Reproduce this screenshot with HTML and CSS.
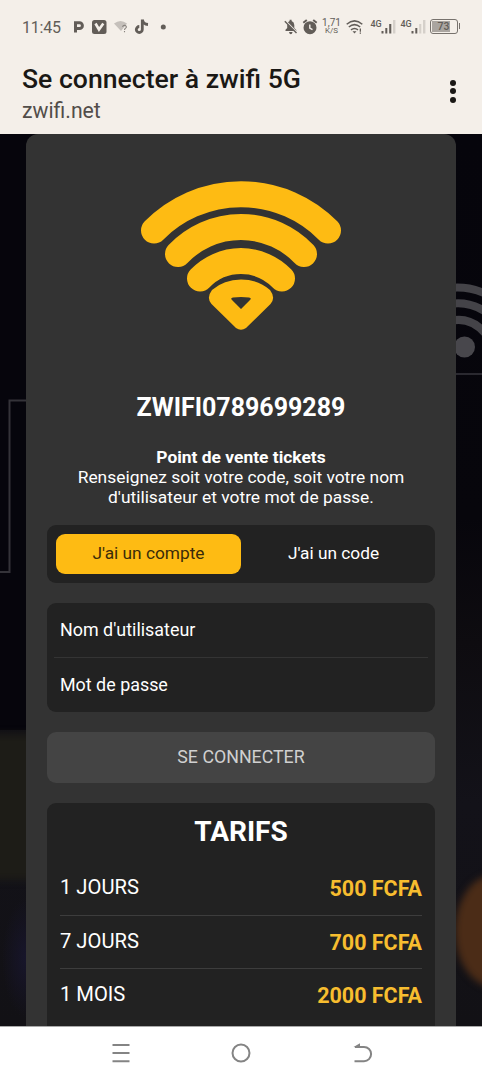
FILE: index.html
```html
<!DOCTYPE html>
<html lang="fr">
<head>
<meta charset="utf-8">
<title>Se connecter à zwifi 5G</title>
<link rel="stylesheet" href="styles.css">
</head>
<body>
<div class="phone">
  <div class="status">
    <div class="status-left">
      <span class="clock">11:45</span>
      <svg class="status-icons" width="100" height="20" viewBox="70 17 100 20">
        <path d="M75.500 32.500V22.800H79.500A2.800 2.800 0 0 1 79.500 28.600H76" fill="none" stroke="#625d58" stroke-width="3"/>
        <rect x="92" y="20" width="14.500" height="14" rx="2.500" fill="#625d58"/>
        <path d="M95.500 23.500L99 29.500L103.300 23.500" fill="none" stroke="#f4efe9" stroke-width="2.600"/>
        <path d="M114 23.500Q120.500 18.500 127 23.500L125.500 25.500L121 31Z" fill="#c5c0bb"/>
        <path d="M122.500 26.800Q123 25.200 124.800 25.400Q126.800 26 126.200 27.600Q124.500 28.700 124.500 30M124.500 31V32.200" fill="none" stroke="#88837e" stroke-width="1.100"/>
        <path d="M142.300 19.500V29.500A3 3 0 1 1 139.300 26.500M142.500 20Q143.300 24.200 148 24.500" fill="none" stroke="#625d58" stroke-width="2.800"/>
        <circle cx="163.300" cy="27" r="2.500" fill="#625d58"/>
      </svg>
    </div>
    <div class="status-right">
      <svg class="status-icons" width="40" height="20" viewBox="282 17 40 20">
        <path d="M284.500 31V29.800L286.200 28V24.500Q286.500 21.500 288.600 21V19.800H290.600V21Q293.300 22 293.300 25V28L295.300 30V31ZM288 32H291.600Q291 34.300 289.800 34.300Q288.500 34.300 288 32Z" fill="#625d58"/>
        <path d="M284.200 20.500L296 32.500" stroke="#f4efe9" stroke-width="1.600"/>
        <path d="M283.800 21.300L295.500 33" stroke="#625d58" stroke-width="1.400"/>
        <circle cx="309" cy="27.700" r="3.500" fill="#625d58" stroke="#625d58" stroke-width="6"/>
        <path d="M308.800 24.500V28L311.500 29.700" fill="none" stroke="#f4efe9" stroke-width="1.400"/>
        <path d="M302.300 22.800L305.800 19.900M312.200 19.900L315.700 22.800" stroke="#625d58" stroke-width="1.900"/>
      </svg>
      <span class="speed"><span>1,71</span><span class="unit">K/S</span></span>
      <svg class="status-icons" width="20" height="20" viewBox="343 17 20 20">
        <path d="M345.700 24.200Q353.500 17.600 361.300 24.200M347.800 27Q353.500 22.300 359.200 27M350 29.800Q353.500 27 357 29.800" fill="none" stroke="#625d58" stroke-width="1.500"/>
        <path d="M351.500 31.200H355.500L353.500 33.500ZM358.700 28.500H360V31.800H358.700ZM358.700 32.500H360V33.700H358.700Z" fill="#625d58"/>
      </svg>
      <span class="net net-a">4G</span>
      <svg class="bars" width="15" height="16" viewBox="381 18 15 16">
        <path d="M381.500 31H383.500V33.500H381.500ZM385.300 28H387.300V33.500H385.300ZM389.200 24H391.300V33.500H389.200Z" fill="#625d58"/>
        <path d="M393 20H395.400V33.500H393Z" fill="#d5d0ca"/>
      </svg>
      <span class="net net-b">4G</span>
      <svg class="bars" width="15" height="16" viewBox="411 18 15 16">
        <path d="M411.500 31H413.500V33.500H411.500ZM415.300 28H417.300V33.500H415.300Z" fill="#625d58"/>
        <path d="M419.200 24H421.300V33.500H419.200ZM423 20H425.400V33.500H423Z" fill="#d5d0ca"/>
      </svg>
      <span class="battery"><span class="level">73</span></span><span class="battery-tip"></span>
    </div>
  </div>

  <header class="app-bar">
    <div class="titles">
      <div class="title">Se connecter à zwifi 5G</div>
      <div class="host">zwifi.net</div>
    </div>
    <div class="more"><i></i><i></i><i></i></div>
  </header>

  <main class="page">
    <svg class="scene" width="482" height="892" viewBox="0 134 482 892">
      <defs>
        <filter id="edge" filterUnits="userSpaceOnUse" x="-80" y="650" width="640" height="450" color-interpolation-filters="sRGB"><feGaussianBlur stdDeviation="3.500"/></filter>
        <radialGradient id="glow">
          <stop offset="0" stop-color="#17152b"/><stop offset="1" stop-color="#17152b" stop-opacity="0"/>
        </radialGradient>
        <linearGradient id="night" x1="0" y1="0" x2="0" y2="1">
          <stop offset="0" stop-color="#06050c"/><stop offset=".43" stop-color="#07060c"/>
          <stop offset=".57" stop-color="#0e0c10"/><stop offset=".75" stop-color="#131219"/><stop offset="1" stop-color="#121115"/>
        </linearGradient>
      </defs>
      <rect y="134" width="482" height="892" fill="url(#night)"/>
      <rect y="134" width="26" height="596" fill="#06050c"/>
      <rect x="-20" y="734" width="60" height="146" fill="#1d1c17" filter="url(#edge)"/>
      <ellipse cx="26" cy="958" rx="24" ry="60" fill="url(#glow)"/>
      <path d="M26 400.500H9.500V572H0" fill="none" stroke="#343339" stroke-width="2"/>
      <path d="M456 374H482" stroke="#34333a" stroke-width="1.600"/>
      <circle cx="464.500" cy="347" r="10.500" fill="#48474c"/>
      <g fill="none" stroke="#444348" stroke-width="8">
        <path d="M450 288Q469 286 486 294"/>
        <path d="M450 304Q469 301 486 312"/>
        <path d="M450 321Q470 316 485 333"/>
      </g>
      <ellipse cx="494" cy="931" rx="39" ry="56" fill="#4b2c17" filter="url(#edge)"/>
    </svg>
    <section class="card">
      <svg class="logo" width="202" height="150" viewBox="140 180 202 150">
        <g fill="none" stroke="#febb13" stroke-width="26" stroke-linecap="round">
          <path d="M154 230.500A122.500 122.500 0 0 1 328 230.500"/>
          <path d="M178 254A87 87 0 0 1 304 254"/>
          <path d="M200 278.500A57 57 0 0 1 282 278.500"/>
        </g>
        <path d="M212 290Q224 279.500 241 279.500Q258 279.500 270 290Q276 298 270.500 304L246 328Q241 331.500 236 328L211.500 304Q206 298 212 290ZM232 300L241 309L250 300Q252 298 249 297.500Q241 296.500 233 297.500Q230 298 232 300Z" fill="#febb13" fill-rule="evenodd"/>
      </svg>
      <h1 class="name">ZWIFI0789699289</h1>
      <div class="intro">
        <b>Point de vente tickets</b>
        <span>Renseignez soit votre code, soit votre nom</span>
        <span>d'utilisateur et votre mot de passe.</span>
      </div>
      <div class="tabs">
        <div class="tab active">J'ai un compte</div>
        <div class="tab">J'ai un code</div>
      </div>
      <div class="fields">
        <div class="field">Nom d'utilisateur</div>
        <div class="rule"></div>
        <div class="field">Mot de passe</div>
      </div>
      <div class="submit">SE CONNECTER</div>
      <div class="prices">
        <h2 class="prices-title">TARIFS</h2>
        <div class="row"><span>1 JOURS</span><b class="price">500 FCFA</b></div>
        <div class="row"><span>7 JOURS</span><b class="price">700 FCFA</b></div>
        <div class="row"><span>1 MOIS</span><b class="price">2000 FCFA</b></div>
      </div>
    </section>
  </main>

  <nav class="nav">
    <svg width="24" height="24" viewBox="0 0 24 24"><path d="M3.500 4H20.500M3.500 12H20.500M3.500 20.200H20.500"/></svg>
    <svg width="24" height="24" viewBox="0 0 24 24"><circle cx="12" cy="12" r="8.500"/></svg>
    <svg width="24" height="24" viewBox="0 0 24 24"><path d="M5 6H14A6.800 6.800 0 0 1 14 20.200H4.500"/><path class="solid" d="M3.500 6L10 2.300V7Z"/></svg>
  </nav>
</div>
</body>
</html>
```
FILE: styles.css
```css
* { box-sizing: border-box; }
body { margin: 0; font-family: Roboto, sans-serif; }
.phone { width: 482px; height: 1080px; overflow: hidden; display: flex; flex-direction: column; background: #f4efe9; }
.status { height: 54px; flex: none; display: flex; justify-content: space-between; color: #625d58; }
.status-left { display: flex; padding: 17px 0 0 22px; }
.clock { width: 48px; font-size: 16px; line-height: 21px; letter-spacing: -.2px; }
.status-right { display: flex; align-items: flex-start; padding: 17px 22px 0 0; }
.status-icons { display: block; flex: none; }
.speed { display: flex; flex-direction: column; align-items: center; width: 21px; font-size: 10px; line-height: 9px; padding-top: 1px; }
.speed > span:first-child { margin-left: -3px; }
.unit { font-size: 8px; line-height: 8px; margin-left: -3px; }
.net { font-size: 9px; line-height: 10px; font-weight: 500; padding-top: 2px; white-space: nowrap; }
.net-a { width: 17px; padding-left: 7px; }
.net-b { width: 15px; padding-left: 5px; }
.bars { display: block; flex: none; margin-top: 1px; }
.battery { width: 28px; height: 15px; margin: 2px 0 0 4px; flex: none; border: 1.5px solid #77726d; border-radius: 3px; padding: 1px; background: #f4efe9; }
.level { display: block; height: 11px; background: linear-gradient(90deg, #aaa5a0 73%, transparent 73%); font-size: 10.5px; line-height: 12px; font-weight: 500; text-align: center; }
.battery-tip { width: 1.5px; height: 6px; background: #77726d; margin: 6px 0 0 1px; }
.app-bar { height: 80px; flex: none; display: flex; justify-content: space-between; padding: 9px 26.5px 0 22px; }
.title { font-size: 26.6px; line-height: 32px; font-weight: 500; color: #1a1815; white-space: nowrap; }
.host { font-size: 21.2px; line-height: 30px; color: #524d49; margin-top: 1px; }
.more { display: flex; flex-direction: column; gap: 2.500px; padding-top: 16.5px; }
.more i { width: 6px; height: 6px; border-radius: 50%; background: #1a1815; }
.page { position: relative; height: 892px; flex: none; padding: 0 26px; overflow: hidden; }
.scene { position: absolute; inset: 0; }
.card { position: relative; height: 920px; padding: 46px 21px 0; background: #333; border-radius: 12px 12px 0 0; color: #fff; }
.logo { display: block; margin: 0 auto; }
.name { margin: 63px 0 0; text-align: center; font-size: 25px; line-height: 30px; font-weight: 700; }
.intro { margin-top: 24px; display: flex; flex-direction: column; align-items: center; font-size: 17.4px; line-height: 20px; white-space: nowrap; }
.tabs { margin-top: 18px; height: 58px; padding: 9px; display: flex; background: #222; border-radius: 9px; }
.tab { width: 185px; height: 40px; line-height: 39px; text-align: center; font-size: 17.3px; }
.active { background: #febb13; color: #3b2b0a; border-radius: 9px; }
.fields { margin-top: 20px; height: 109px; background: #222; border-radius: 9px; }
.field { height: 54px; padding-left: 13px; line-height: 54px; font-size: 17.9px; }
.rule { height: 1px; background: #343434; margin: 0 7px; }
.submit { margin-top: 20px; height: 51px; line-height: 50px; border-radius: 9px; background: #444; color: #d0d0d0; text-align: center; font-size: 17.8px; }
.prices { margin-top: 20px; height: 260px; padding: 0 13px; background: #222; border-radius: 9px; }
.prices-title { margin: 0; height: 59px; line-height: 58px; text-align: center; font-size: 28px; font-weight: 700; }
.row { height: 53.500px; display: flex; justify-content: space-between; line-height: 51px; font-size: 20.2px; border-bottom: 1px solid #3d3d3d; }
.row:last-child { border-bottom: 0; }
.price { color: #f7bd2f; font-size: 21.5px; line-height: 54px; }
.nav { height: 54px; flex: none; display: flex; justify-content: center; gap: 96.500px; padding-top: 14px; background: #fff; border-top: 1px solid #aaa; }
.nav svg { display: block; fill: none; stroke: #848484; stroke-width: 2; }
.nav .solid { fill: #848484; stroke: none; }
```
